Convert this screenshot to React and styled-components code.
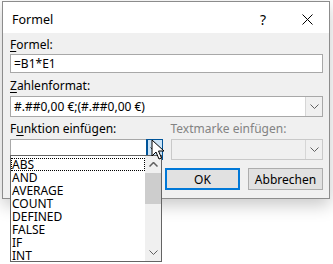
import React from 'react';
import styled, { createGlobalStyle } from 'styled-components';

const Global = createGlobalStyle`
  body {
    margin: 0;
    background: #ffffff;
    font-family: "Noto Sans", "Open Sans", sans-serif;
    font-size: 12px;
    color: #000;
  }
`;

const Page = styled.div`
  width: 333px;
  height: 264px;
  position: relative;
  overflow: hidden;
  padding: 1px 0 0 2px;
  box-sizing: border-box;
`;

const Dialog = styled.div`
  width: 328px;
  height: 198px;
  box-sizing: border-box;
  border: 1px solid #8c8c8c;
  background: #f0f0f0;
  box-shadow: 0 6px 16px rgba(0, 0, 0, 0.22);
  display: flex;
  flex-direction: column;
`;

const TitleBar = styled.div`
  height: 31px;
  box-sizing: border-box;
  padding: 3px 0 0 9px;
  background: #fff;
  display: flex;
  align-items: center;
  font-size: 12.5px;
`;

const Title = styled.span`
  flex: 1;
`;

const TitleBtn = styled.span`
  width: 44px;
  display: flex;
  justify-content: center;
  align-items: center;
  font-size: 14px;
`;

const Body = styled.div`
  padding: 4px 6px 0 7px;
  display: flex;
  flex-direction: column;
`;

const Label = styled.div`
  height: 16px;
  line-height: 16px;
  color: ${(p) => (p.disabled ? '#838383' : '#000')};
  u { text-decoration: underline; text-underline-offset: 2px; }
`;

const Input = styled.div`
  height: 19px;
  box-sizing: border-box;
  border: 1px solid #a8a8a8;
  background: #fff;
  padding-left: 3px;
  line-height: 17px;
  margin: 1px 0 5px;
`;

const Combo = styled.div`
  height: 21px;
  box-sizing: border-box;
  border: 1px solid ${(p) => (p.disabled ? '#c9c9c9' : '#a8a8a8')};
  background: ${(p) => (p.disabled ? '#f0f0f0' : '#fff')};
  display: flex;
  align-items: stretch;
  margin: 2px 0 4px;
`;

const ComboText = styled.div`
  flex: 1;
  padding-left: 3px;
  line-height: 19px;
`;

const ArrowBtn = styled.div`
  width: 16px;
  display: flex;
  align-items: center;
  justify-content: center;
  background: ${(p) => (p.active ? '#cce4f7' : '#f0f0f0')};
  border-left: 1px solid ${(p) => (p.active ? '#005499' : '#d6d6d6')};
  box-shadow: ${(p) => (p.active ? 'inset 0 0 0 1px #005499' : 'none')};
  margin: ${(p) => (p.active ? '-1px -1px -1px 0' : '0')};
`;

const Row = styled.div`
  display: flex;
  gap: 8px;
`;

const Col = styled.div`
  width: ${(p) => p.w}px;
  display: flex;
  flex-direction: column;
`;

const Buttons = styled.div`
  display: flex;
  justify-content: flex-end;
  gap: 8px;
  margin-top: 4px;
`;

const Button = styled.div`
  width: 75px;
  height: 22px;
  box-sizing: border-box;
  border: ${(p) => (p.primary ? '2px solid #0078d7' : '1px solid #adadad')};
  background: #e1e1e1;
  display: flex;
  align-items: center;
  justify-content: center;
`;

const List = styled.div`
  position: absolute;
  left: 10px;
  top: 155px;
  width: 152px;
  height: 107px;
  box-sizing: border-box;
  border: 1px solid #646464;
  background: #fff;
  display: flex;
`;

const Items = styled.div`
  flex: 1;
  display: flex;
  flex-direction: column;
  padding-top: 2px;
`;

const Item = styled.div`
  height: 13px;
  line-height: 13px;
  padding-left: 1px;
  font-size: 12px;
  outline: ${(p) => (p.focus ? '1px dotted #000' : 'none')};
  outline-offset: -1px;
`;

const Scroll = styled.div`
  width: 16px;
  background: #f0f0f0;
  display: flex;
  flex-direction: column;
  align-items: center;
`;

const ScrollArrow = styled.div`
  height: 17px;
  display: flex;
  align-items: center;
  justify-content: center;
`;

const Thumb = styled.div`
  width: 16px;
  height: 31px;
  background: #cdcdcd;
`;

const Cursor = styled.svg`
  position: absolute;
  left: 151px;
  top: 139px;
`;

const Chevron = ({ color = '#606060' }) => (
  <svg width="9" height="5" viewBox="0 0 9 5">
    <path d="M0.5 0.5 L4.5 4.5 L8.5 0.5" fill="none" stroke={color} strokeWidth="1" />
  </svg>
);

const items = ['ABS', 'AND', 'AVERAGE', 'COUNT', 'DEFINED', 'FALSE', 'IF', 'INT'];

const App = () => (
  <Page>
    <Global />
    <Dialog>
      <TitleBar>
        <Title>Formel</Title>
        <TitleBtn>?</TitleBtn>
        <TitleBtn>
          <svg width="11" height="11" viewBox="0 0 11 11">
            <path d="M0.5 0.5 L10.5 10.5 M10.5 0.5 L0.5 10.5" stroke="#000" strokeWidth="1" />
          </svg>
        </TitleBtn>
      </TitleBar>
      <Body>
        <Label><u>F</u>ormel:</Label>
        <Input>=B1*E1</Input>
        <Label><u>Z</u>ahlenformat:</Label>
        <Combo>
          <ComboText>#.##0,00 €;(#.##0,00 €)</ComboText>
          <ArrowBtn><Chevron /></ArrowBtn>
        </Combo>
        <Row>
          <Col w={153}>
            <Label>F<u>u</u>nktion einfügen:</Label>
            <Combo>
              <ComboText />
              <ArrowBtn active><Chevron color="#333" /></ArrowBtn>
            </Combo>
          </Col>
          <Col w={153}>
            <Label disabled>Textmarke einfügen:</Label>
            <Combo disabled>
              <ComboText />
              <ArrowBtn><Chevron /></ArrowBtn>
            </Combo>
          </Col>
        </Row>
        <Buttons>
          <Button primary>OK</Button>
          <Button>Abbrechen</Button>
        </Buttons>
      </Body>
    </Dialog>
    <List>
      <Items>
        {items.map((it, i) => (
          <Item key={it} focus={i === 0}>{it}</Item>
        ))}
      </Items>
      <Scroll>
        <ScrollArrow><svg width="9" height="5" viewBox="0 0 9 5"><path d="M0.5 4.5 L4.5 0.5 L8.5 4.5" fill="none" stroke="#606060" strokeWidth="1.5" /></svg></ScrollArrow>
        <Thumb />
        <div style={{ flex: 1 }} />
        <ScrollArrow><Chevron /></ScrollArrow>
      </Scroll>
    </List>
    <Cursor width="14" height="22" viewBox="0 0 14 22">
      <path d="M1 1 L1 17 L5 13 L8 20 L10.5 19 L7.5 12 L13 12 Z" fill="#fff" stroke="#000" strokeWidth="1" strokeLinejoin="round" />
    </Cursor>
  </Page>
);

export default App;
